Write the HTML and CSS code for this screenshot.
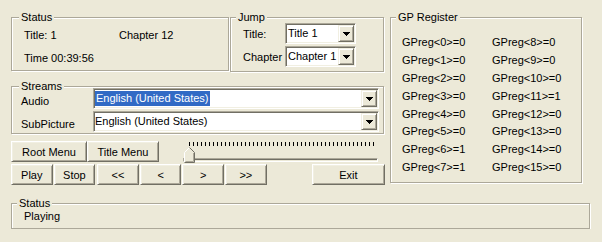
FILE: index.html
```html
<!DOCTYPE html>
<html lang="en">
<head>
    <meta charset="UTF-8" />
    <title>DVD Player</title>
    <link rel="stylesheet" href="styles.css">
</head>
<body>
    <div class="dialog">
        <div class="main">
            <div class="left">
                <div class="top-row">
                    <div class="group status-group">
                        <span class="caption">Status</span>
                        <div class="status-grid">
                            <span>Title: 1</span>
                            <span>Chapter 12</span>
                            <span>Time 00:39:56</span>
                        </div>
                    </div>
                    <div class="group jump-group">
                        <span class="caption">Jump</span>
                        <div class="field">
                            <span class="jump-label">Title:</span>
                            <div class="combo jump-combo">
                                <span class="combo-text">Title 1</span>
                                <span class="drop"><svg width="7" height="4" viewBox="0 0 7 4"><path d="M0 0h7v1h-1v1h-1v1h-1v1h-1v-1h-1v-1h-1v-1h-1z" fill="#000"/></svg></span>
                            </div>
                        </div>
                        <div class="field">
                            <span class="jump-label">Chapter</span>
                            <div class="combo jump-combo">
                                <span class="combo-text">Chapter 1</span>
                                <span class="drop"><svg width="7" height="4" viewBox="0 0 7 4"><path d="M0 0h7v1h-1v1h-1v1h-1v1h-1v-1h-1v-1h-1v-1h-1z" fill="#000"/></svg></span>
                            </div>
                        </div>
                    </div>
                </div>

                <div class="group streams-group">
                    <span class="caption">Streams</span>
                    <div class="field">
                        <span class="stream-label">Audio</span>
                        <div class="combo stream-combo">
                            <span class="combo-text"><span class="selected">English (United States)</span></span>
                            <span class="drop"><svg width="7" height="4" viewBox="0 0 7 4"><path d="M0 0h7v1h-1v1h-1v1h-1v1h-1v-1h-1v-1h-1v-1h-1z" fill="#000"/></svg></span>
                        </div>
                    </div>
                    <div class="field">
                        <span class="stream-label">SubPicture</span>
                        <div class="combo stream-combo">
                            <span class="combo-text">English (United States)</span>
                            <span class="drop"><svg width="7" height="4" viewBox="0 0 7 4"><path d="M0 0h7v1h-1v1h-1v1h-1v1h-1v-1h-1v-1h-1v-1h-1z" fill="#000"/></svg></span>
                        </div>
                    </div>
                </div>

                <div class="btn-row first-row">
                    <button class="btn root-btn">Root Menu</button>
                    <button class="btn title-btn">Title Menu</button>
                    <div class="slider">
                        <div class="ticks"></div>
                        <div class="track"></div>
                        <svg class="thumb" width="12" height="16" viewBox="0 0 12 16">
                            <path d="M0.5 15.5V5.5L5.5 0.5L10.5 5.5V15.5Z" fill="#ece9d8"/>
                            <path d="M0.5 15V5.5L5.5 0.5" fill="none" stroke="#fff"/>
                            <path d="M5.5 0.5L10.5 5.5V15.5H0.5" fill="none" stroke="#716f64"/>
                            <path d="M9.5 6V14.5H1.5" fill="none" stroke="#aca899"/>
                        </svg>
                    </div>
                </div>
                <div class="btn-row second-row">
                    <button class="btn small">Play</button>
                    <button class="btn small stop-btn">Stop</button>
                    <button class="btn small nav-first">&lt;&lt;</button>
                    <button class="btn small nav">&lt;</button>
                    <button class="btn small nav">&gt;</button>
                    <button class="btn small nav">&gt;&gt;</button>
                    <button class="btn exit-btn">Exit</button>
                </div>
            </div>

            <div class="group gp-group">
                <span class="caption">GP Register</span>
                <div class="gp-grid">
                    <span>GPreg&lt;0&gt;=0</span>
                    <span>GPreg&lt;1&gt;=0</span>
                    <span>GPreg&lt;2&gt;=0</span>
                    <span>GPreg&lt;3&gt;=0</span>
                    <span>GPreg&lt;4&gt;=0</span>
                    <span>GPreg&lt;5&gt;=0</span>
                    <span>GPreg&lt;6&gt;=1</span>
                    <span>GPreg&lt;7&gt;=1</span>
                    <span>GPreg&lt;8&gt;=0</span>
                    <span>GPreg&lt;9&gt;=0</span>
                    <span>GPreg&lt;10&gt;=0</span>
                    <span>GPreg&lt;11&gt;=1</span>
                    <span>GPreg&lt;12&gt;=0</span>
                    <span>GPreg&lt;13&gt;=0</span>
                    <span>GPreg&lt;14&gt;=0</span>
                    <span>GPreg&lt;15&gt;=0</span>
                </div>
            </div>
        </div>

        <div class="group bottom-status">
            <span class="caption">Status</span>
            <div class="status-text">Playing</div>
        </div>
    </div>
</body>
</html>
```

FILE: styles.css
```css
body {
    margin: 0;
    background-color: #ece9d8;
    font-family: "Liberation Sans", Arial, sans-serif;
    font-size: 11px;
    color: #000;
}
.dialog {
    padding: 17px 0 0 11px;
}
.main {
    display: flex;
    align-items: flex-start;
    gap: 5px;
}
.left {
    width: 374px;
}
.top-row {
    display: flex;
    align-items: flex-start;
    gap: 1px;
}

/* etched group boxes */
.group {
    position: relative;
    box-sizing: border-box;
    border: 1px solid #aca899;
    box-shadow: inset 1px 1px #fff, 1px 1px #fff;
}
.caption {
    position: absolute;
    top: -7px;
    left: 5px;
    padding: 0 2px;
    line-height: 13px;
    background-color: #ece9d8;
}

.status-group {
    width: 218px;
    height: 54px;
    padding: 10px 0 0 12px;
}
.status-group .caption {
    left: 7px;
}
.status-grid {
    display: grid;
    grid-template-columns: 95px auto;
    grid-auto-rows: 14px;
    row-gap: 9px;
    line-height: 14px;
}

.jump-group {
    width: 154px;
    height: 55px;
    padding: 5px 0 0 12px;
}
.field {
    display: flex;
    align-items: center;
    margin-bottom: 2px;
}
.jump-label {
    width: 42px;
}

/* combo boxes */
.combo {
    box-sizing: border-box;
    height: 21px;
    display: flex;
    align-items: center;
    background-color: #fff;
    border: 1px solid;
    border-color: #aca899 #fff #fff #aca899;
    box-shadow: inset 1px 1px #716f64, inset -1px -1px #f1efe2;
}
.jump-combo {
    width: 71px;
}
.combo-text {
    flex: 1;
    padding-left: 2px;
    line-height: 15px;
    white-space: nowrap;
    overflow: hidden;
}
.drop {
    box-sizing: border-box;
    width: 16px;
    height: 17px;
    margin-right: 1px;
    display: flex;
    align-items: center;
    justify-content: center;
    background-color: #ece9d8;
    border: 1px solid;
    border-color: #f1efe2 #716f64 #716f64 #f1efe2;
    box-shadow: inset 1px 1px #fff, inset -1px -1px #aca899;
}
.drop svg {
    display: block;
    margin-top: 1px;
}

.streams-group {
    width: 373px;
    height: 48px;
    margin-top: 14px;
    padding: 1px 0 0 9px;
}
.streams-group .caption {
    left: 7px;
}
.stream-label {
    width: 72px;
    margin-top: 4px;
}
.stream-combo {
    width: 286px;
}
.stream-combo .combo-text {
    padding-left: 1px;
}
.selected {
    display: inline-block;
    background-color: #316ac5;
    color: #fff;
    padding: 0 1px;
    line-height: 15px;
}

/* buttons */
.btn-row {
    display: flex;
    align-items: flex-start;
}
.first-row {
    margin-top: 7px;
}
.second-row {
    margin-top: 2px;
}
.btn {
    box-sizing: border-box;
    height: 21px;
    padding: 0;
    font-family: inherit;
    font-size: 11px;
    color: #000;
    background-color: #ece9d8;
    border: 1px solid;
    border-color: #fff #716f64 #716f64 #fff;
    box-shadow: inset 1px 1px #f1efe2, inset -1px -1px #aca899;
}
.root-btn {
    width: 76px;
}
.title-btn {
    width: 72px;
}
.small {
    width: 42px;
}
.stop-btn {
    margin-left: 1px;
}
.nav-first {
    margin-left: 2px;
}
.nav {
    margin-left: 1px;
}
.exit-btn {
    width: 74px;
    margin-left: 45px;
}

/* slider */
.slider {
    position: relative;
    width: 195px;
    height: 21px;
    margin-left: 24px;
}
.ticks {
    width: 185px;
    height: 4px;
    margin: 1px 0 0 6px;
    background: repeating-linear-gradient(to right, #000 0 1px, transparent 1px 4px);
}
.track {
    box-sizing: border-box;
    width: 195px;
    height: 4px;
    margin-top: 12px;
    border: 1px solid;
    border-color: #aca899 #fff #fff #aca899;
    box-shadow: inset 1px 1px #716f64;
}
.thumb {
    position: absolute;
    left: 1px;
    top: 6px;
}

/* GP register */
.gp-group {
    width: 192px;
    height: 166px;
    padding: 16px 0 0 11px;
}
.gp-grid {
    display: grid;
    grid-template-columns: 90px auto;
    grid-template-rows: repeat(8, 17.9px);
    grid-auto-flow: column;
    line-height: 17.9px;
}

/* bottom status */
.bottom-status {
    width: 579px;
    height: 26px;
    margin-top: 18px;
    padding: 6px 0 0 12px;
    line-height: 13px;
}
```
